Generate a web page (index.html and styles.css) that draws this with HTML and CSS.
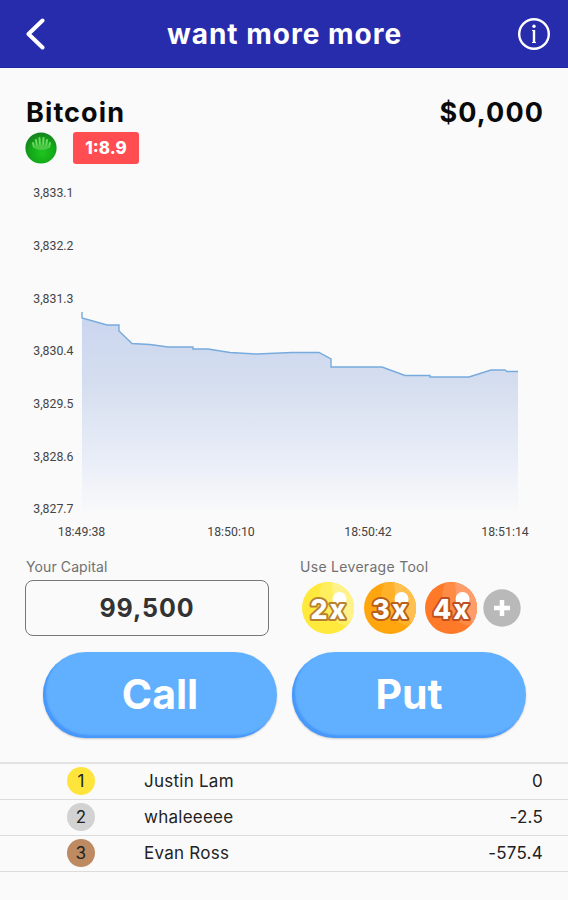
FILE: index.html
```html
<!DOCTYPE html>
<html lang="en">
<head>
  <meta charset="UTF-8" />
  <meta name="viewport" content="width=device-width, initial-scale=1.0"/>
  <title>Bitcoin - want more more</title>
  <link rel="stylesheet" href="styles.css">
</head>
<body>

<header class="top-bar">
  <svg class="back" width="20" height="34" viewBox="0 0 20 34">
    <path d="M17.5 3.5 L3.5 17 L17.5 30.5" fill="none" stroke="#fff" stroke-width="4" stroke-linecap="round" stroke-linejoin="round"/>
  </svg>
  <h1 class="title">want more more</h1>
  <svg class="info" width="34" height="34" viewBox="0 0 34 34">
    <circle cx="17" cy="17" r="14.8" fill="none" stroke="#fff" stroke-width="2.4"/>
    <circle cx="17" cy="9.2" r="1.7" fill="#fff"/>
    <path d="M15 13.5h2M15 25.500h4" stroke="#fff" stroke-width="1.2"/>
    <path d="M17 13v13" stroke="#fff" stroke-width="2.4"/>
  </svg>
</header>

<section class="asset">
  <div class="asset-row">
    <h2 class="asset-name">Bitcoin</h2>
    <div class="price">$0,000</div>
  </div>
  <div class="asset-tags">
    <svg width="32" height="32" viewBox="0 0 32 32">
      <defs>
        <radialGradient id="green" cx="55%" cy="65%" r="60%">
          <stop offset="0" stop-color="#1fc51f"/>
          <stop offset="0.65" stop-color="#12a818"/>
          <stop offset="1" stop-color="#16851e"/>
        </radialGradient>
      </defs>
      <circle cx="16" cy="16" r="15.6" fill="url(#green)"/>
      <path d="M9 15L8 11M12 15L11 8M15 14L14.5 6M18 14L18.5 6M21 15L22 8M24 15L25 11" stroke="#6fd565" stroke-width="2" stroke-linecap="round"/>
      <path d="M8 14q8-3 17 0q-2 4-8.500 4T8 14z" fill="#4cc845"/>
    </svg>
    <span class="ratio">1:8.9</span>
  </div>
</section>

<svg class="chart" width="568" height="370" viewBox="0 180 568 370">
  <defs>
    <linearGradient id="area" gradientUnits="userSpaceOnUse" x1="0" y1="312" x2="0" y2="514">
      <stop offset="0" stop-color="#cad5ef"/>
      <stop offset="0.35" stop-color="#d5deef"/>
      <stop offset="0.75" stop-color="#eaeef8"/>
      <stop offset="1" stop-color="#fafafa"/>
    </linearGradient>
  </defs>
  <path d="M82 312V318L107 325H119V331L132 343.500L150 344.500L168 347H193V349H208L230 352.500L257 354L292 352.500H319L331 359V367H382L405 375.500H430V377H469L491 370H505L507 371.500H518V514H82Z" fill="url(#area)"/>
  <path d="M82 312V318L107 325H119V331L132 343.500L150 344.500L168 347H193V349H208L230 352.500L257 354L292 352.500H319L331 359V367H382L405 375.500H430V377H469L491 370H505L507 371.500H518" fill="none" stroke="#77aadd" stroke-width="1.400"/>
  <g class="axis" text-anchor="end">
    <text x="73.500" y="197">3,833.1</text>
    <text x="73.500" y="249.500">3,832.2</text>
    <text x="73.500" y="302.500">3,831.3</text>
    <text x="73.500" y="355">3,830.4</text>
    <text x="73.500" y="408">3,829.5</text>
    <text x="73.500" y="460.500">3,828.6</text>
    <text x="73.500" y="513">3,827.7</text>
  </g>
  <g class="axis" text-anchor="middle">
    <text x="81.500" y="536">18:49:38</text>
    <text x="231" y="536">18:50:10</text>
    <text x="368" y="536">18:50:42</text>
    <text x="505" y="536">18:51:14</text>
  </g>
</svg>

<section class="trade">
  <div class="capital">
    <div class="label label-capital">Your Capital</div>
    <div class="amount">99,500</div>
  </div>
  <div class="leverage">
    <div class="label label-tool">Use Leverage Tool</div>
    <div class="tools">
      <svg class="tool" width="52" height="52" viewBox="0 0 52 52">
        <circle cx="26" cy="26" r="26" fill="#ffe93c"/>
        <path d="M20 1A26 26 0 0 1 45 44Q33 42 26 32T17 12Z" fill="#ffee5e"/>
        <path d="M30 0.400A26 26 0 0 1 48 40Q36 34 32 20Z" fill="#fff28a"/>
        <circle cx="37.500" cy="17" r="7" fill="#fff"/>
        <text class="mult" x="27" y="36.500" stroke="#b9822f">2x</text>
      </svg>
      <svg class="tool" width="52" height="52" viewBox="0 0 52 52">
        <circle cx="26" cy="26" r="26" fill="#ffa60f"/>
        <path d="M20 1A26 26 0 0 1 45 44Q33 42 26 32T17 12Z" fill="#ffb12a"/>
        <path d="M30 0.400A26 26 0 0 1 48 40Q36 34 32 20Z" fill="#ffc050"/>
        <circle cx="37.500" cy="17" r="7" fill="#fff"/>
        <text class="mult" x="27" y="36.500" stroke="#b95f17">3x</text>
      </svg>
      <svg class="tool" width="52" height="52" viewBox="0 0 52 52">
        <circle cx="26" cy="26" r="26" fill="#ff7a28"/>
        <path d="M20 1A26 26 0 0 1 45 44Q33 42 26 32T17 12Z" fill="#ff8b45"/>
        <path d="M30 0.400A26 26 0 0 1 48 40Q36 34 32 20Z" fill="#ff9d6a"/>
        <circle cx="37.500" cy="17" r="7" fill="#fff"/>
        <text class="mult" x="27" y="36.500" stroke="#bd5020">4x</text>
      </svg>
      <svg class="add" width="38" height="38" viewBox="0 0 38 38">
        <circle cx="19" cy="19" r="18.700" fill="#b9b9b9"/>
        <path d="M19 11v16M11 19h16" stroke="#fff" stroke-width="4.500"/>
      </svg>
    </div>
  </div>
</section>

<div class="actions">
  <button class="btn call">Call</button>
  <button class="btn put">Put</button>
</div>

<div class="ranking">
  <div class="rank-row">
    <span class="medal gold">1</span>
    <span class="player">Justin Lam</span>
    <span class="score">0</span>
  </div>
  <div class="rank-row">
    <span class="medal silver">2</span>
    <span class="player">whaleeeee</span>
    <span class="score">-2.5</span>
  </div>
  <div class="rank-row">
    <span class="medal bronze">3</span>
    <span class="player">Evan Ross</span>
    <span class="score">-575.4</span>
  </div>
</div>

</body>
</html>
```

FILE: styles.css
```css
* {
  box-sizing: border-box;
}

body {
  margin: 0;
  height: 900px;
  overflow: hidden;
  background: #fafafa;
  font-family: Inter, "Liberation Sans", sans-serif;
  color: #111;
}

svg {
  display: block;
}

.top-bar {
  display: flex;
  align-items: center;
  justify-content: space-between;
  height: 68px;
  padding: 0 17px 0 25px;
  background: #262cac;
  border-bottom: 1px solid #2024a0;
}

.title {
  margin: 0 0 0 7px;
  font-size: 28px;
  line-height: 34px;
  font-weight: 700;
  letter-spacing: 1px;
  color: #fff;
}

.asset {
  padding: 27px 25px 0 26px;
}

.asset-row {
  display: flex;
  justify-content: space-between;
}

.asset-name,
.price {
  margin: 0;
  font-size: 27px;
  line-height: 36px;
  font-weight: 650;
  letter-spacing: 1.1px;
  color: #0a0a0a;
}

.price {
  margin-right: -1px;
}

.asset-tags {
  display: flex;
  align-items: center;
  gap: 16px;
  height: 34px;
  margin-left: -1px;
}

.ratio {
  width: 66px;
  height: 32px;
  border-radius: 3px;
  background: #ff4d52;
  color: #fff;
  font-size: 17px;
  line-height: 32px;
  font-weight: 800;
  text-align: center;
}

.chart {
  margin-top: 15px;
}

.axis {
  font-family: Roboto, sans-serif;
  font-size: 12.3px;
  fill: #444;
}

.trade {
  display: flex;
  height: 86px;
  padding: 0 26px 0 25px;
  margin-top: 6px;
}

.capital {
  width: 244px;
  margin-right: 31px;
}

.label {
  height: 24px;
  padding-left: 1px;
  font-size: 14px;
  line-height: 22px;
  letter-spacing: 0.1px;
  color: #707070;
  white-space: nowrap;
}

.label-tool {
  padding-left: 0;
  letter-spacing: 0.3px;
}

.amount {
  height: 56px;
  border: 1.5px solid #777;
  border-radius: 8px;
  font-size: 25px;
  line-height: 55px;
  font-weight: 650;
  letter-spacing: 0.9px;
  text-align: center;
  color: #333;
}

.tools {
  display: flex;
  align-items: center;
  gap: 9.5px;
  height: 56px;
  padding-left: 2px;
}

.add {
  margin-left: -4px;
}

.mult {
  font-size: 27px;
  font-weight: 800;
  letter-spacing: 2px;
  text-anchor: middle;
  fill: #fff;
  stroke-width: 4px;
  stroke-linejoin: round;
  paint-order: stroke;
}

.actions {
  display: flex;
  gap: 15px;
  margin-top: 10px;
  padding-left: 43px;
}

.btn {
  width: 234px;
  height: 86px;
  padding: 0 0 2px;
  border: 0;
  border-radius: 43px;
  background: #61b0ff;
  box-shadow: inset 3px -3px 2px #4898fc, 0 1px 2px rgba(0, 0, 0, 0.2);
  color: #fff;
  font-family: inherit;
  font-size: 41px;
  font-weight: 700;
}

.ranking {
  margin-top: 24px;
  border-top: 2px solid #e3e3e3;
}

.rank-row {
  display: flex;
  align-items: center;
  height: 36px;
  padding: 0 25px 1px 67px;
  border-bottom: 1.5px solid #dcdcdc;
  font-size: 17px;
  letter-spacing: 0.25px;
  color: #222;
}

.medal {
  width: 28px;
  height: 28px;
  border-radius: 50%;
  line-height: 28px;
  text-align: center;
}

.gold {
  background: #ffe53b;
}

.silver {
  background: #d2d2d2;
}

.bronze {
  background: #bd8a62;
}

.player {
  flex: 1;
  margin-left: 49px;
}
```
